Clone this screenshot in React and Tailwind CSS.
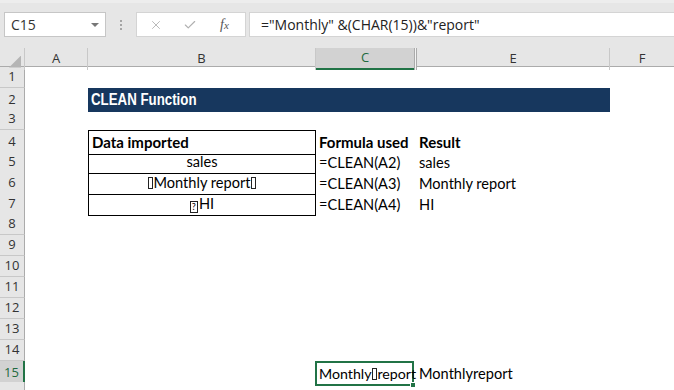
import React from 'react';
import { X, Check } from 'lucide-react';

const GRID = 'grid grid-cols-[25px_63px_228px_98px_3px_193px_64px]';
const CELL_FONT = { fontFamily: 'Lato, "Open Sans", sans-serif' };
const HEAD_FONT = { fontFamily: '"Open Sans", "Noto Sans", sans-serif' };

// tofu box glyphs for the non-printable chars
const Tofu = () => (
    <span className="inline-block w-[5px] h-[12px] border border-[#222] align-[-1px] mx-[0.5px]" />
);
const QTofu = () => (
    <span className="inline-flex items-center justify-center w-[8px] h-[12px] border border-[#222] text-[9px] leading-none align-[-1px] mr-[1px]">?</span>
);

const RowHead = ({ n, selected }) => (
    <div
        style={HEAD_FONT}
        className={`flex items-center justify-center text-[13px] border-b border-[#c8c8c8] ${
            selected
                ? 'bg-[#d2d2d2] text-[#1e6a40] border-r-2 border-r-[#217346]'
                : 'bg-[#e6e6e6] text-[#333] border-r border-r-[#ababab]'
        }`}
    >
        {n}
    </div>
);

const Row = ({ n, selected, children }) => (
    <div className={`${GRID} h-[21px]`}>
        <RowHead n={n} selected={selected} />
        {children || (
            <>
                <div />
                <div />
                <div />
                <div />
                <div />
                <div />
            </>
        )}
    </div>
);

const TableRow = ({ n, first, b, c, e, bold }) => (
    <Row n={n}>
        <div />
        <div
            style={CELL_FONT}
            className={`flex items-center px-[3px] text-[14.6px] text-black border-x border-b border-black ${
                first ? 'border-t justify-start font-bold text-[15px]' : 'justify-center'
            }`}
        >
            {b}
        </div>
        <div style={CELL_FONT} className={`flex items-center pl-[3px] text-black whitespace-nowrap ${bold ? 'font-bold text-[15px]' : 'text-[14.6px]'}`}>
            {c}
        </div>
        <div />
        <div style={CELL_FONT} className={`flex items-center pl-[2px] text-black whitespace-nowrap ${bold ? 'font-bold text-[15px]' : 'text-[14.6px]'}`}>
            {e}
        </div>
        <div />
    </Row>
);

export default function App() {
    return (
        <div className="w-[674px] h-[390px] overflow-hidden bg-white">
            {/* Formula bar */}
            <div className="h-[48px] bg-[#e6e6e6] border-t-[3px] border-[#ededed] flex items-start pt-[9px]">
                <div className="ml-[4px] w-[102px] h-[25px] bg-white border border-[#c6c6c6] flex items-center justify-between pl-[6px] pr-[6px]">
                    <span style={HEAD_FONT} className="text-[14px] text-[#333]">C15</span>
                    <span className="w-0 h-0 border-l-[4px] border-r-[4px] border-t-[4px] border-l-transparent border-r-transparent border-t-[#777]" />
                </div>
                <div className="w-[30px] h-[25px] flex flex-col items-center justify-center gap-[2px]">
                    <span className="w-[2px] h-[2px] bg-[#a5a5a5]" />
                    <span className="w-[2px] h-[2px] bg-[#a5a5a5]" />
                    <span className="w-[2px] h-[2px] bg-[#a5a5a5]" />
                </div>
                <div className="w-[110px] h-[25px] bg-white border border-[#d4d4d4] flex items-center">
                    <X className="w-[14px] h-[14px] text-[#b0b0b0] ml-[12px]" strokeWidth={1.5} />
                    <Check className="w-[14px] h-[14px] text-[#b0b0b0] ml-[20px]" strokeWidth={2} />
                    <span style={{ fontFamily: '"Liberation Serif", serif' }} className="ml-[23px] text-[14px] italic text-[#555]">
                        f<span className="text-[11px]">x</span>
                    </span>
                </div>
                <div className="ml-[3px] flex-1 h-[25px] bg-white border border-[#d4d4d4] border-r-0 flex items-center pl-[11px]">
                    <span style={HEAD_FONT} className="text-[14px] text-[#222] whitespace-nowrap">
                        ="Monthly" &amp;(CHAR(15))&amp;"report"
                    </span>
                </div>
            </div>

            {/* Column headers */}
            <div style={HEAD_FONT} className={`${GRID} h-[19px] bg-[#e6e6e6] border-b border-[#ababab] text-[13px] text-[#333]`}>
                <div className="relative border-r border-[#c8c8c8]">
                    <span className="absolute right-[3px] bottom-[2px] w-[12px] h-[12px] bg-[#b5b5b5] [clip-path:polygon(100%_0,100%_100%,0_100%)]" />
                </div>
                <div className="flex items-center justify-center border-r border-[#c8c8c8]">A</div>
                <div className="flex items-center justify-center border-r border-[#c8c8c8]">B</div>
                <div className="flex items-center justify-center bg-[#d2d2d2] text-[#1e6a40] border-b-2 border-[#217346]">C</div>
                <div className="border-x border-[#ababab] bg-[#f4f4f4]" />
                <div className="flex items-center justify-center border-r border-[#c8c8c8]">E</div>
                <div className="flex items-center justify-center">F</div>
            </div>

            {/* Sheet */}
            <Row n={1} />
            <Row n={2}>
                <div />
                <div className="col-span-4 bg-[#17375e] flex items-center pl-[3px]">
                    <span
                        style={{ fontFamily: '"Liberation Sans", sans-serif' }}
                        className="inline-block origin-left scale-x-[0.83] text-white font-bold text-[16px]"
                    >
                        CLEAN Function
                    </span>
                </div>
                <div />
            </Row>
            <Row n={3} />
            <TableRow n={4} first bold b="Data imported" c="Formula used" e="Result" />
            <TableRow n={5} b="sales" c="=CLEAN(A2)" e="sales" />
            <TableRow
                n={6}
                b={<span><Tofu />Monthly report<Tofu /></span>}
                c="=CLEAN(A3)"
                e="Monthly report"
            />
            <TableRow n={7} b={<span><QTofu />HI</span>} c="=CLEAN(A4)" e="HI" />
            <Row n={8} />
            <Row n={9} />
            <Row n={10} />
            <Row n={11} />
            <Row n={12} />
            <Row n={13} />
            <Row n={14} />
            <Row n={15} selected>
                <div />
                <div />
                <div style={CELL_FONT} className="relative flex items-center pl-[2px] text-[14.2px] text-black whitespace-nowrap border-2 border-[#217346] -ml-[1px]">
                    <span>Monthly<Tofu />report</span>
                    <span className="absolute -right-[4px] -bottom-[4px] w-[6px] h-[6px] bg-[#217346] border border-white" />
                </div>
                <div />
                <div style={CELL_FONT} className="flex items-center pl-[2px] text-[14.6px] text-black whitespace-nowrap">
                    Monthlyreport
                </div>
                <div />
            </Row>
            <Row n="" />
        </div>
    );
}
